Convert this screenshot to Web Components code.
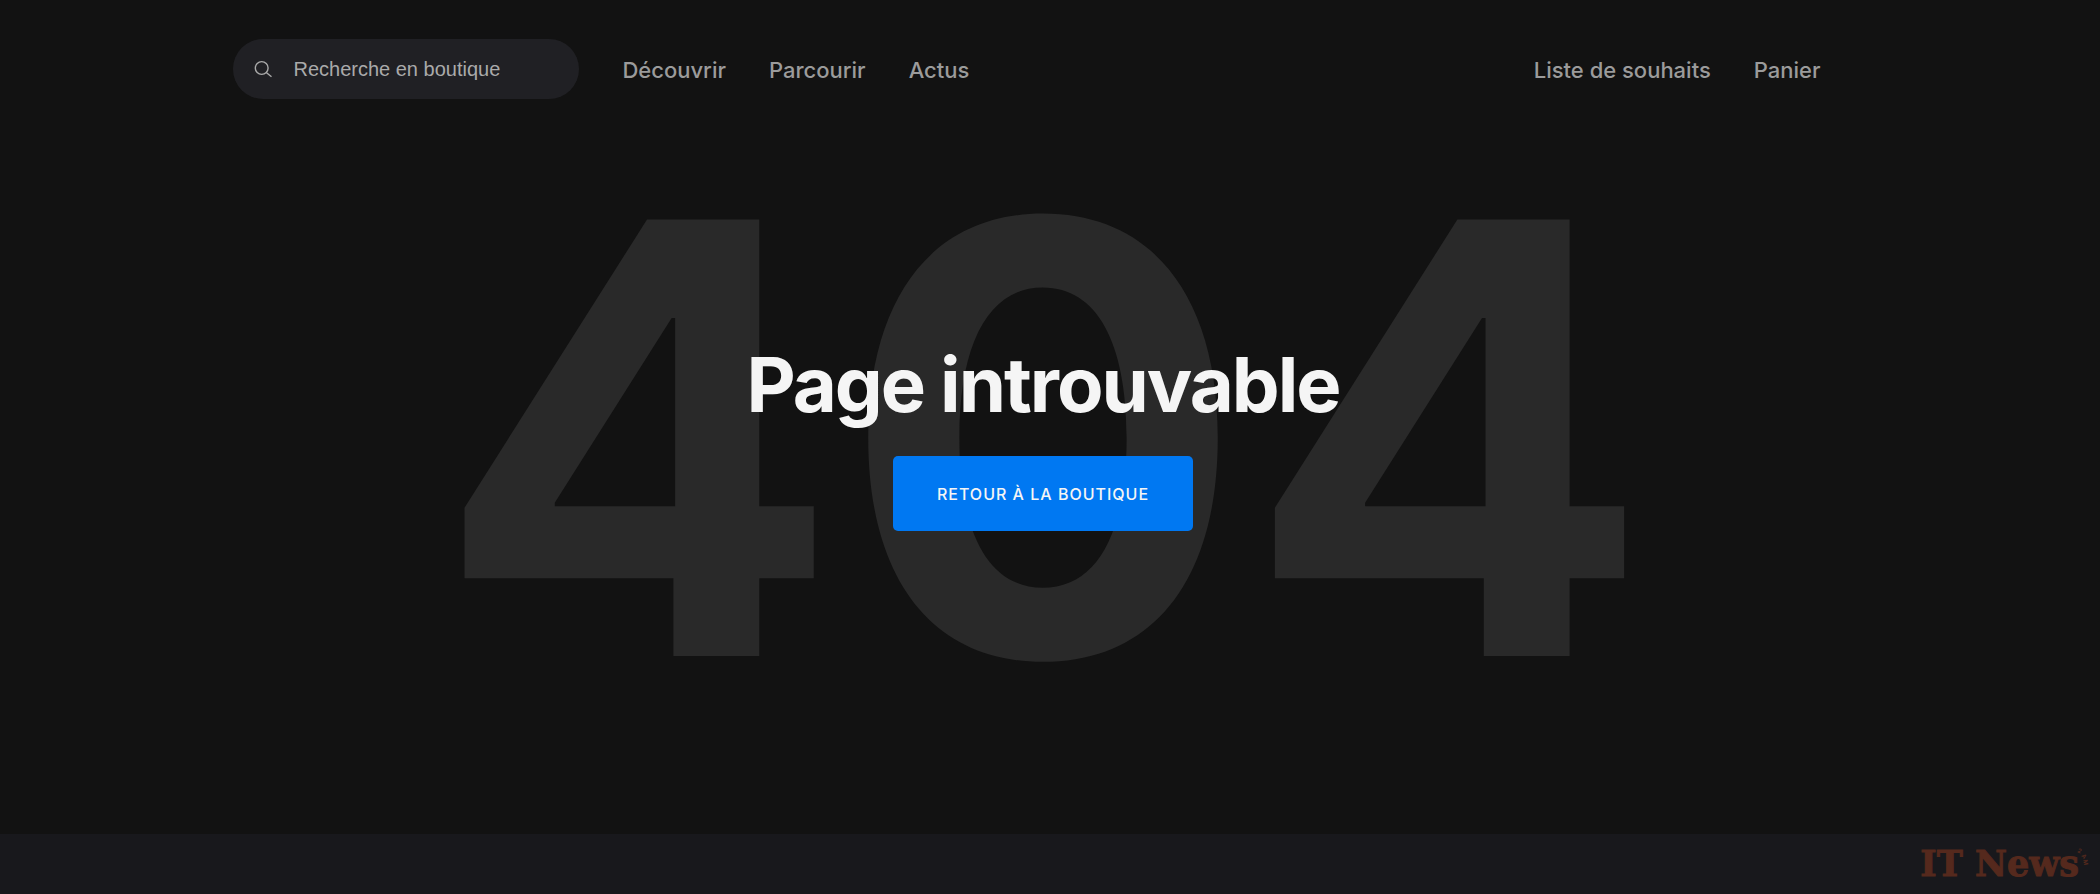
<!DOCTYPE html>
<html lang="fr">
<head>
<meta charset="utf-8">
<title>Page introuvable</title>
<style>
html, body { margin: 0; min-height: 100%; }
body { background: #121212; color: #f5f5f5; font-family: Inter, "Liberation Sans", sans-serif; }
</style>
</head>
<body>
<store-page>
  <store-header slot="header">
    <store-search></store-search>
    <nav-link>Découvrir</nav-link>
    <nav-link>Parcourir</nav-link>
    <nav-link>Actus</nav-link>
    <nav-link slot="end">Liste de souhaits</nav-link>
    <nav-link slot="end">Panier</nav-link>
  </store-header>
  <not-found code="404">
    <span slot="title">Page introuvable</span>
    <span slot="action">Retour à la boutique</span>
  </not-found>
  <store-footer slot="footer"></store-footer>
</store-page>
<script>
const define = (name, html, setup) => customElements.define(name, class extends HTMLElement {
  constructor() {
    super();
    this.attachShadow({ mode: "open" }).innerHTML = html;
  }
  connectedCallback() { if (setup) setup(this); }
});

define("store-page", `
<style>
  :host { display: flex; flex-direction: column; min-height: 100vh; }
  .body { padding-right: 14px; flex: 1; }
</style>
<div class="body"><slot name="header"></slot><main><slot></slot></main></div>
<slot name="footer"></slot>`);

define("store-header", `
<style>
  :host { display: block; padding: 39px 11% 0; }
  header, nav, .end { display: flex; align-items: center; gap: 43px; }
  header { justify-content: space-between; height: 60px; margin-left: 4px; margin-right: 36px; }
</style>
<header><nav aria-label="Boutique"><slot></slot></nav><div class="end"><slot name="end"></slot></div></header>`);

define("store-search", `
<style>
  :host { display: block; }
  label { display: flex; align-items: center; gap: 20px; box-sizing: border-box; width: 346px; height: 60px; padding: 0 20px; border-radius: 30px; background: #202024; color: #aaa; }
  svg { flex: none; }
  input { flex: 1; min-width: 0; padding: 0; border: 0; outline: 0; background: none; color: inherit; font: 20px "Liberation Sans", sans-serif; }
  input::placeholder { color: #aaa; opacity: 1; }
</style>
<label><svg width="20" height="20" viewBox="0 0 20 20" fill="none" stroke="currentColor" stroke-width="1.4" aria-hidden="true"><circle cx="8.7" cy="9" r="6.4"/><path d="M13.3 13.5l5.2 4.2"/></svg><input type="text" placeholder="Recherche en boutique" aria-label="Recherche en boutique"></label>`);

define("nav-link", `
<style>
  :host { display: block; padding-top: 2px; }
  a { display: block; color: #9b9b9b; text-decoration: none; font-size: 22px; font-weight: 500; line-height: 30px; white-space: nowrap; }
</style>
<a href="#"><slot></slot></a>`);

define("not-found", `
<style>
  :host { display: grid; justify-items: center; padding-top: 39px; }
  .code, .message { grid-area: 1 / 1; }
  .code { font-size: 600px; font-weight: 700; line-height: 600px; color: #292929; }
  .message { position: relative; display: flex; flex-direction: column; align-items: center; gap: 24px; padding-top: 198px; }
  h1 { margin: 0; font-size: 76px; font-weight: 700; line-height: 96px; letter-spacing: -2px; }
  button { height: 75px; padding: 0 44px; border: 0; border-radius: 5px; background: #0078f2; color: #f5f5f5; font: 500 16px/24px Inter, sans-serif; letter-spacing: 1px; text-transform: uppercase; }
</style>
<div class="code" aria-hidden="true"></div>
<div class="message"><h1><slot name="title"></slot></h1><button type="button"><slot name="action"></slot></button></div>`,
host => { host.shadowRoot.querySelector(".code").textContent = host.getAttribute("code"); });

define("store-footer", `
<style>
  :host { display: block; background: #18181c; }
  footer { display: flex; justify-content: flex-end; height: 60px; padding-right: 11px; color: #55291d; }
  .brand { font: 700 35px/60px "DejaVu Serif", serif; -webkit-text-stroke: 1px currentColor; }
  svg { width: 10px; height: 60px; overflow: visible; font: 700 6px Inter, sans-serif; fill: currentColor; }
</style>
<footer><span class="brand">IT News</span><svg viewBox="0 0 10 60" aria-label="2AM"><text transform="translate(-2 18) rotate(25)">2</text><text transform="translate(2 22) rotate(50)">A</text><text transform="translate(4 26) rotate(80)">M</text></svg></footer>`);
</script>
</body>
</html>
